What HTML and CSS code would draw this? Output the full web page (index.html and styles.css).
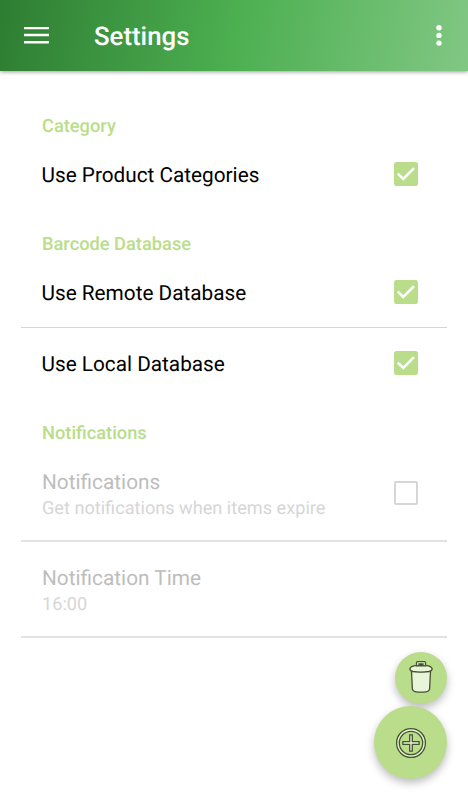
FILE: index.html
```html
<!DOCTYPE html>
<html lang="en"><head><meta charset="utf-8"><title>Settings</title><link rel="stylesheet" href="styles.css"></head>
<body>
<header class="bar">
<svg class="menu" width="26" height="18" viewBox="0 0 26 18"><path d="M0 .9h25M0 8h25M0 15.2h25" stroke="#fff" stroke-width="2.6"/></svg>
<h1>Settings</h1>
<svg class="more" width="6" height="22" viewBox="0 0 6 22" fill="#fff"><circle cx="3" cy="2.7" r="2.7"/><circle cx="3" cy="10.4" r="2.7"/><circle cx="3" cy="18.1" r="2.7"/></svg>
</header>
<main>
<section class="category"><h2>Category</h2><div class="row"><span>Use Product Categories</span><svg class="check" viewBox="0 0 24 24"><rect width="24" height="24" rx="2.5"/><path d="M3.8 11.7l5.5 5.3L20 6.2"/></svg></div></section>
<section class="database"><h2>Barcode Database</h2><div class="row"><span>Use Remote Database</span><svg class="check" viewBox="0 0 24 24"><rect width="24" height="24" rx="2.5"/><path d="M3.8 11.7l5.5 5.3L20 6.2"/></svg></div>
<div class="row local"><span>Use Local Database</span><svg class="check" viewBox="0 0 24 24"><rect width="24" height="24" rx="2.5"/><path d="M3.8 11.7l5.5 5.3L20 6.2"/></svg></div></section>
<section class="notifications"><h2>Notifications</h2><div class="item"><div><div class="title">Notifications</div><div class="sub">Get notifications when items expire</div></div><span class="box"></span></div>
<div class="item time"><div><div class="title">Notification Time</div><div class="sub">16:00</div></div></div></section>
</main>
<div class="fab small"><svg width="24" height="34" viewBox="0 0 24 34"><path d="M2.5 11.5L3.4 29Q3.8 31.5 7 31.8Q12 32.5 17 31.8Q20.2 31.5 20.6 29L21.5 11.5Z"/><path d="M.8 9Q1.5 6.3 6 5.6Q12 4.8 18 5.6Q22.5 6.3 23.2 9Q23 10.8 20 11.4Q12 12.7 4 11.4Q1 10.8 .8 9Z"/><path fill-rule="evenodd" d="M7.5 5.8V2.6Q7.5 1.6 8.5 1.6H15.5Q16.5 1.6 16.5 2.6V5.8ZM10 5.4V4H14V5.4Z"/></svg></div>
<div class="fab large"><svg width="32" height="32" viewBox="0 0 32 32"><path fill-rule="evenodd" d="M1.6 16a14.4 14.4 0 1 0 28.8 0a14.4 14.4 0 1 0-28.8 0ZM4.3 16a11.7 11.7 0 1 0 23.4 0a11.7 11.7 0 1 0-23.4 0Z"/><path d="M14.7 7.9h2.6v6.8h6.8v2.6h-6.8v6.8h-2.6v-6.8H7.9v-2.6h6.8z"/></svg></div>
</body></html>
```
FILE: styles.css
```css
*{box-sizing:border-box}
body{margin:0;height:800px;background:#fff;font-family:Roboto,sans-serif;position:relative;overflow:hidden;text-rendering:geometricPrecision}
.bar{height:71px;display:flex;align-items:center;padding:0 26px 0 24px;background:linear-gradient(100deg,#2e7d32,#4caf50 50%,#81c784);box-shadow:0 1px 4px #0006}
h1{font-size:25.8px;font-weight:500;color:#fff;margin:0 auto 0 44px;padding-top:2px}
main{padding:0 21px}
h2{font-size:18.25px;line-height:22px;font-weight:500;color:#b9dd8a;margin:0;padding:0 21px}
section{padding-top:25px}
.category{padding-top:45px}
.row{height:71px;display:flex;align-items:center;justify-content:space-between;padding:0 29.5px 0 20.5px;font-size:20.75px;color:#000}
.row span{padding-top:5px}
.local{border-top:1px solid #d6d6d6}
.local span{padding-top:4px}
.check{width:24px;height:24px;fill:#b9dd8a}
.local .check{margin-top:-1px}
.check path{fill:none;stroke:#fff;stroke-width:2.5}
.item{height:96px;display:flex;align-items:center;justify-content:space-between;padding:3px 29.5px 0 21px;border-bottom:2px solid #e2e2e2}
.notifications h2{margin-bottom:1px}
.title{font-size:20.8px;line-height:28px;color:#bdbdbd}
.sub{font-size:18.15px;line-height:24px;color:#d6d6d6}
.box{width:24px;height:24px;border:2.5px solid #d6d6d6;border-radius:2px;margin-top:-3px}
.fab{position:absolute;border-radius:50%;background:#b9dd8a;display:flex;align-items:center;justify-content:center;box-shadow:0 4px 9px #0004}
.fab svg{fill:#e8f5d9;stroke:#45532f;stroke-width:1.3}
.small{left:395px;top:652px;width:52px;height:52px}
.small svg{margin-top:-2px}
.large{left:374px;top:706px;width:73px;height:73px}
```
